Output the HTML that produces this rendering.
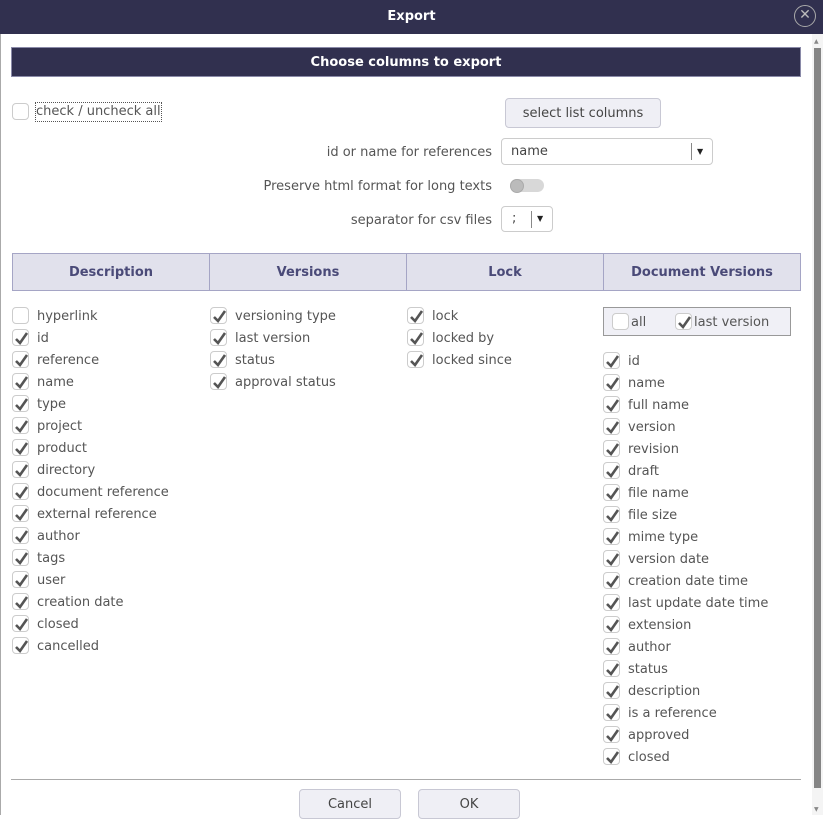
<!DOCTYPE html>
<html><head><style>
*{box-sizing:border-box;margin:0;padding:0}
body{width:823px;height:815px;overflow:hidden;background:#fff;font-family:"DejaVu Sans","Liberation Sans",sans-serif;font-size:13px;color:#555;position:relative}
.abs{position:absolute}
.title{left:0;top:0;width:823px;height:34px;background:#31304f;color:#fff;font-weight:bold;text-align:center;line-height:33px;font-size:13px}
.close{left:794px;top:5px;width:22px;height:22px;border:1.5px solid #aaa;border-radius:50%;color:#bbb;text-align:center;line-height:19px;font-size:14px}
.frame{left:0;top:34px;width:812px;height:781px;border-left:1px solid #aaa}
.sb{left:812px;top:34px;width:11px;height:781px;background:#f4f4f4}
.thumb{left:814px;top:48px;width:7px;height:740px;background:#858585}
.banner{left:11px;top:47px;width:790px;height:30px;background:#31304f;border:1px solid #8a8aa8;color:#fff;font-weight:bold;text-align:center;line-height:29px}
.cb{width:17px;height:17px;border:1px solid #ccc;border-radius:4px;background:#fff}
.cb svg{position:absolute;left:1px;top:1px}
.item{position:absolute;height:22px;line-height:22px;white-space:nowrap}
.item .cb{position:absolute;left:0;top:2px}
.item span{position:absolute;left:25px;top:1px}
.btn{background:#efeff5;border:1px solid #c8c8d4;border-radius:4px;text-align:center;color:#444}
.hdr{top:253px;height:38px;background:#e1e1ec;border:1px solid #a5a5c5;color:#4a4a78;font-weight:bold;text-align:center;line-height:38px}
.lbl{text-align:right;width:300px}
</style></head><body>
<div class="abs title">Export</div>
<div class="abs close">✕</div>
<div class="abs frame"></div>
<div class="abs sb"></div>
<div class="abs thumb"></div>
<div class="abs" style="left:814px;top:38px;font-size:6px;color:#888">▲</div>
<div class="abs" style="left:814px;top:806px;font-size:6px;color:#888">▼</div>
<div class="abs banner">Choose columns to export</div>

<div class="item" style="left:12px;top:101px"><div class="cb"></div><span style="outline:1px dotted #555;left:24px;line-height:18px;top:2px">check / uncheck all</span></div>
<div class="abs btn" style="left:505px;top:98px;width:156px;height:30px;line-height:29px">select list columns</div>

<div class="abs lbl" style="left:192px;top:145px">id or name for references</div>
<div class="abs" style="left:501px;top:138px;width:212px;height:27px;border:1px solid #ccc;border-radius:4px;line-height:25px;padding-left:9px;color:#444">name<div class="abs" style="left:189px;top:4px;height:17px;border-left:1px solid #888"></div><div class="abs" style="left:195px;top:0;font-size:8px;color:#222">▼</div></div>
<div class="abs lbl" style="left:192px;top:179px">Preserve html format for long texts</div>
<div class="abs" style="left:510px;top:179px;width:34px;height:13px;border-radius:7px;background:#d8d8d8"></div>
<div class="abs" style="left:510px;top:179px;width:14px;height:14px;border-radius:50%;background:#bbb;border:1px solid #aaa"></div>
<div class="abs lbl" style="left:192px;top:213px">separator for csv files</div>
<div class="abs" style="left:501px;top:206px;width:52px;height:26px;border:1px solid #ccc;border-radius:4px;line-height:24px;padding-left:10px;color:#444">;<div class="abs" style="left:29px;top:4px;height:17px;border-left:1px solid #888"></div><div class="abs" style="left:35px;top:0;font-size:8px;color:#222">▼</div></div>

<div class="abs hdr" style="left:12px;width:198px">Description</div>
<div class="abs hdr" style="left:209px;width:198px">Versions</div>
<div class="abs hdr" style="left:406px;width:198px">Lock</div>
<div class="abs hdr" style="left:603px;width:198px">Document Versions</div>

<div class="abs" style="left:603px;top:307px;width:188px;height:29px;border:1px solid #999;background:#f0f0f6"></div>
<div class="item" style="left:612px;top:311px"><div class="cb"></div><span style="left:19px">all</span></div>
<div class="item" style="left:675px;top:311px"><div class="cb"><svg width="15" height="15" viewBox="0 0 15 15"><path d="M2 8l4 4 7-10" fill="none" stroke="#555" stroke-width="2.6"/></svg></div><span style="left:19px">last version</span></div>

<div class="abs" style="left:11px;top:779px;width:790px;border-top:1px solid #aaa"></div>
<div class="abs btn" style="left:299px;top:789px;width:102px;height:30px;line-height:30px">Cancel</div>
<div class="abs btn" style="left:418px;top:789px;width:102px;height:30px;line-height:30px">OK</div>

<div id="lists"></div>
<script>
const ck='<svg width="15" height="15" viewBox="0 0 15 15"><path d="M2 8l4 4 7-10" fill="none" stroke="#555" stroke-width="2.6"/></svg>';
function col(x,y,items,first){let h='';items.forEach((t,i)=>{const c=(first&&i==0)?'':ck;h+=`<div class="item" style="left:${x}px;top:${y+i*22}px"><div class="cb">${c}</div><span>${t}</span></div>`});return h}
document.getElementById('lists').innerHTML=
col(12,305,["hyperlink","id","reference","name","type","project","product","directory","document reference","external reference","author","tags","user","creation date","closed","cancelled"],true)+
col(210,305,["versioning type","last version","status","approval status"])+
col(407,305,["lock","locked by","locked since"])+
col(603,350,["id","name","full name","version","revision","draft","file name","file size","mime type","version date","creation date time","last update date time","extension","author","status","description","is a reference","approved","closed"]);
</script>
</body></html>
